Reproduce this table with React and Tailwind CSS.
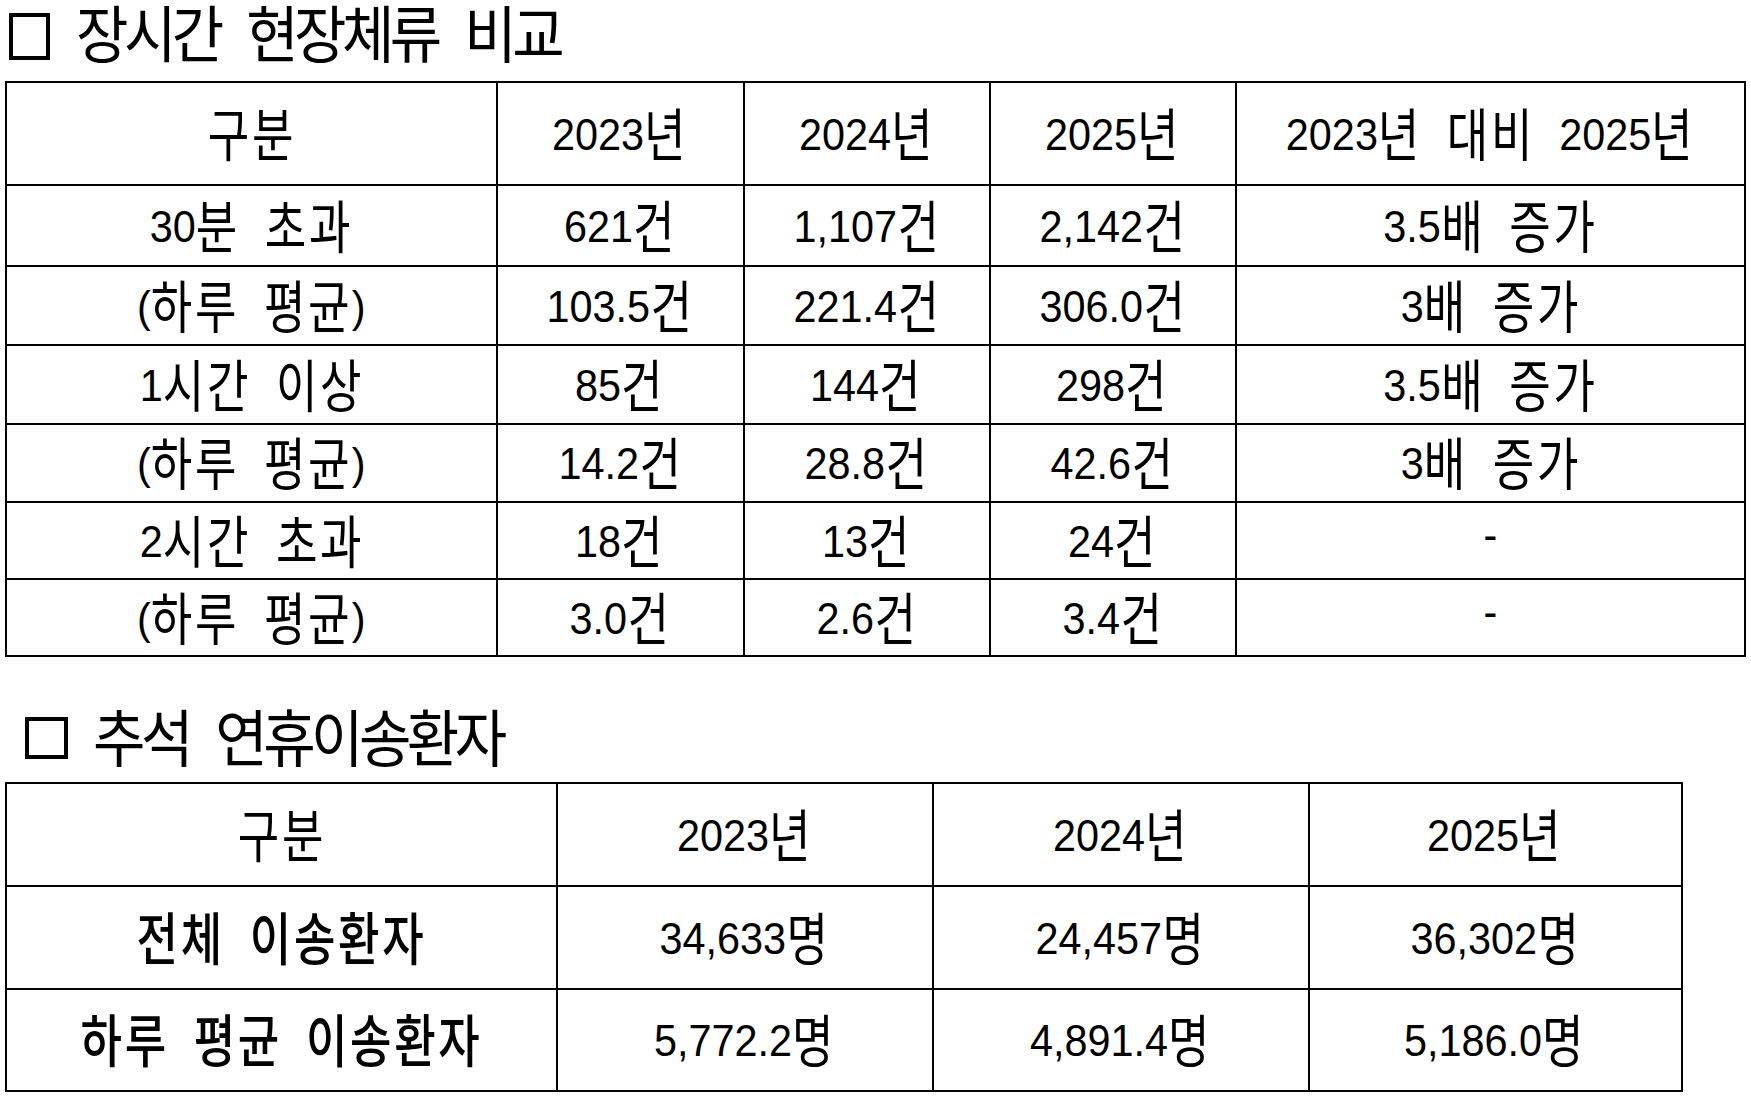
const isHangul = (ch) => /[\uAC00-\uD7A3]/.test(ch);

// condensed hangul: each syllable squeezed into a narrow box
const Txt = ({ s }) =>
  s.split("").map((ch, i) =>
    isHangul(ch) ? (
      <span key={i} className="inline-block w-[48px] text-[57px] leading-none">
        <span className="inline-block origin-left scale-x-[0.86] translate-y-[6px] font-['Noto_Sans_CJK_KR',sans-serif]">
          {ch}
        </span>
      </span>
    ) : (
      <span key={i}>{ch}</span>
    )
  );

const Cell = ({ s, first, bold }) => (
  <div
    className={`flex items-center justify-center whitespace-pre pb-[12px] ${first ? "" : "border-l-2 border-black"} ${bold ? "font-medium" : ""}`}
  >
    <span className="inline-block scale-x-[0.92] leading-none">
      <Txt s={s} />
    </span>
  </div>
);

const Title = ({ text, className, boxClass, textClass }) => (
  <div className={`flex items-start ${className}`}>
    <div className={`border-[4px] border-black shrink-0 ${boxClass}`} />
    <div
      className={`inline-block origin-left scale-x-[0.92] font-['Noto_Sans_CJK_KR',sans-serif] text-[62px] leading-[62px] tracking-[-5px] [word-spacing:20px] whitespace-pre pr-[12px] ${textClass}`}
    >
      {text}
    </div>
  </div>
);

const stayRows = [
  ["30분 초과", "621건", "1,107건", "2,142건", "3.5배 증가", "h-[81px]"],
  ["(하루 평균)", "103.5건", "221.4건", "306.0건", "3배 증가", "h-[79px]"],
  ["1시간 이상", "85건", "144건", "298건", "3.5배 증가", "h-[79px]"],
  ["(하루 평균)", "14.2건", "28.8건", "42.6건", "3배 증가", "h-[78px]"],
  ["2시간 초과", "18건", "13건", "24건", "-", "h-[77px]"],
  ["(하루 평균)", "3.0건", "2.6건", "3.4건", "-", "h-[77px]"],
];

const transferRows = [
  ["전체 이송환자", "34,633명", "24,457명", "36,302명", "h-[103px]"],
  ["하루 평균 이송환자", "5,772.2명", "4,891.4명", "5,186.0명", "h-[102px]"],
];

export default function App() {
  return (
    <div className="w-[1751px] h-[1102px] bg-white text-black font-['Liberation_Sans','Noto_Sans_CJK_KR',sans-serif] text-[45px] [word-spacing:14px]">
      <Title
        text="장시간 현장체류 비교"
        className="h-[81px] pl-[9px]"
        boxClass="mt-[13px] w-[41px] h-[47px]"
        textClass="ml-[26px] mt-0"
      />

      <div className="ml-[5px] w-[1741px] border-2 border-black">
        <div className="grid grid-cols-[489px_247px_246px_246px_1fr] h-[101px]">
          <Cell s="구분" first />
          <Cell s="2023년" />
          <Cell s="2024년" />
          <Cell s="2025년" />
          <Cell s="2023년 대비 2025년" />
        </div>
        {stayRows.map((r, i) => (
          <div key={i} className={`grid grid-cols-[489px_247px_246px_246px_1fr] border-t-2 border-black ${r[5]}`}>
            <Cell s={r[0]} first />
            <Cell s={r[1]} />
            <Cell s={r[2]} />
            <Cell s={r[3]} />
            <Cell s={r[4]} />
          </div>
        ))}
      </div>

      <Title
        text="추석 연휴이송환자"
        className="h-[125px] pl-[25px]"
        boxClass="mt-[60px] w-[43px] h-[42px]"
        textClass="ml-[25px] mt-[47px]"
      />

      <div className="ml-[5px] w-[1678px] border-2 border-black">
        <div className="grid grid-cols-[549px_376px_376px_1fr] h-[101px]">
          <Cell s="구분" first />
          <Cell s="2023년" />
          <Cell s="2024년" />
          <Cell s="2025년" />
        </div>
        {transferRows.map((r, i) => (
          <div key={i} className={`grid grid-cols-[549px_376px_376px_1fr] border-t-2 border-black ${r[4]}`}>
            <Cell s={r[0]} first bold />
            <Cell s={r[1]} />
            <Cell s={r[2]} />
            <Cell s={r[3]} />
          </div>
        ))}
      </div>
    </div>
  );
}
